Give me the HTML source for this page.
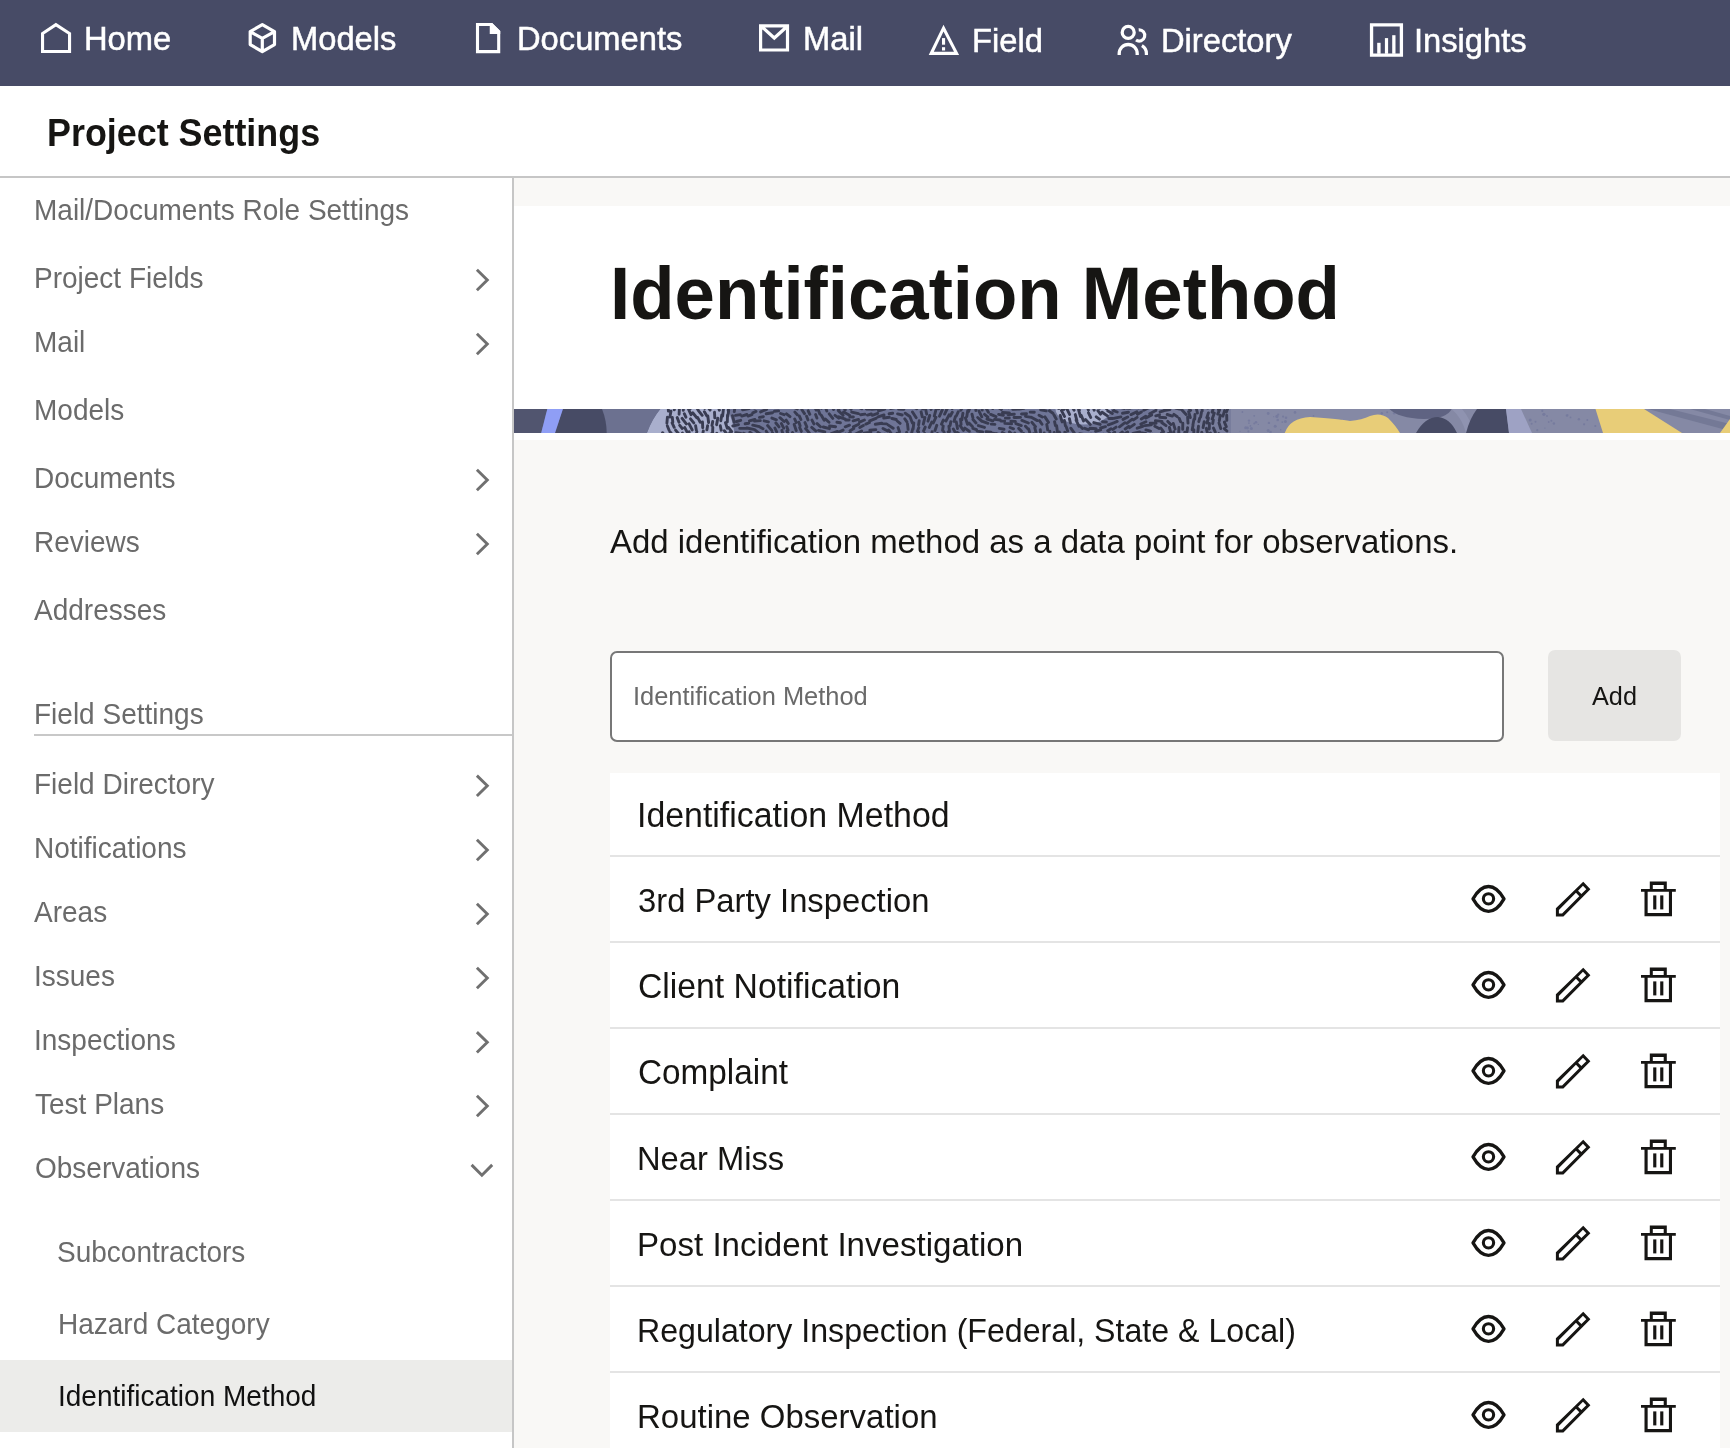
<!DOCTYPE html>
<html><head><meta charset="utf-8"><style>
html,body{margin:0;padding:0;width:1730px;height:1448px;overflow:hidden;background:#fff;}
.abs{position:absolute;}
.t{position:absolute;will-change:transform;font-family:"Liberation Sans",sans-serif;line-height:1;white-space:nowrap;}
</style></head><body>
<div class="abs" style="left:0;top:0;width:1730px;height:86px;background:#474b66"></div>

<svg class="abs" style="left:0;top:0" width="1730" height="86" viewBox="0 0 1730 86" fill="none" stroke="#ffffff" stroke-width="3.1">
 <path d="M42.55,51.45 V33.5 L55.9,24.7 L69.55,33.5 V51.45 Z" stroke-linejoin="miter"/>
 <path d="M262.3,24.6 L274.5,31.6 V44.6 L262.3,51.6 L250.2,44.6 V31.6 Z M250.2,31.6 L262.3,38.4 L274.5,31.6 M262.3,38.4 V51.6" stroke-width="3.2" stroke-linejoin="round"/>
 <path d="M477.5,24.5 H491.5 L498.7,31.7 V51.6 H477.5 Z"/>
 <path d="M489.75,23 H492.1 L500.2,31 V34 H489.75 Z" fill="#ffffff" stroke="none"/>
 <path d="M760.6,25.8 H787.5 V50 H760.6 Z M761.5,26.5 L774.3,38 L787,26.5" stroke-width="3.2"/>
 <path fill-rule="evenodd" fill="#ffffff" stroke="none" d="M943.5,24.8 L959.1,54.9 L928.7,54.9 Z M943.5,31.6 L933.8,51.8 L954,51.8 Z"/>
 <rect x="942" y="38.1" width="3.1" height="6.6" fill="#ffffff" stroke="none"/>
 <rect x="942" y="47.2" width="3.1" height="3.3" fill="#ffffff" stroke="none"/>
 <circle cx="1128.2" cy="32.45" r="6" stroke-width="3.25"/>
 <path d="M1119.2,55.1 V53.5 A9,9 0 0 1 1137.2,53.5 V55.1" stroke-width="3.3"/>
 <path d="M1138.7,29.8 A5.6,5.6 0 1 1 1136.0,40.0" stroke-width="3.2"/>
 <path d="M1141.9,45.7 A9,9 0 0 1 1146.4,53.5 V55.1" stroke-width="3.2"/>
 <path d="M1371.55,24.9 H1401.4 V55.1 H1371.55 Z" stroke-width="3.3"/>
 <rect x="1377.2" y="42.8" width="3.4" height="11" fill="#ffffff" stroke="none"/>
 <rect x="1384.9" y="38.1" width="3.2" height="15.7" fill="#ffffff" stroke="none"/>
 <rect x="1392.2" y="35.2" width="3.3" height="18.6" fill="#ffffff" stroke="none"/>
</svg>
<div class="abs" style="left:0;top:176px;width:1730px;height:2px;background:#c6c6c6"></div>
<div class="abs" style="left:514px;top:178px;width:1216px;height:1270px;background:#f9f8f6"></div>
<div class="abs" style="left:514px;top:206px;width:1216px;height:234px;background:#ffffff"></div>
<svg class="abs" style="left:514px;top:409px" width="1216" height="24" viewBox="514 409 1216 24"><defs><clipPath id="bc"><rect x="514" y="409" width="1216" height="24"/></clipPath></defs><g clip-path="url(#bc)"><rect x="514" y="409" width="1216" height="24" fill="#8589a5"/><rect x="640" y="409" width="591" height="24" fill="#6f7597"/><rect x="1150" y="409" width="81" height="24" fill="#787d9c"/><path d="M646.9,433 Q652,419 660.3,409 L727,409 Q733,420 734.3,433 Z" fill="#a9afcd"/><path d="M1055.5,409 A27.7,15.5 0 0 0 1111,409 Z" fill="#a9afcd"/><rect x="514" y="409" width="132" height="24" fill="#6c7190"/><path d="M646.9,433 Q652,419 660.3,409 L600,409 L600,433 Z" fill="#6c7190"/><path d="M514,409 L547.3,409 L541.2,433 L514,433 Z" fill="#51556f"/><path d="M562.9,409 L602,409 Q606.5,420 606.7,433 L555,433 Z" fill="#474b65"/><path d="M547.3,409 L562.9,409 L555,433 L541.2,433 Z" fill="#8f9ef5"/><path d="M662.6,432.7L666.2,437.9M667.4,417.3L666.9,423.1M667.3,425.8L669.1,430.2M668.1,404.1L668.4,411.1M671.0,411.1L669.9,417.0M669.9,431.8L672.5,434.8M672.3,417.5L672.8,422.2M672.1,422.8L674.2,427.3M675.1,404.0L674.3,409.9M675.6,430.1L678.7,433.9M677.2,417.6L679.0,422.2M679.4,408.5L679.1,414.3M679.7,425.4L682.3,428.5M682.4,433.1L683.7,436.7M683.7,405.3L683.3,410.3M682.1,418.4L686.3,423.9M684.3,413.7L685.9,417.2M684.8,427.6L687.5,432.8M689.1,431.7L689.6,437.1M688.5,409.1L691.0,414.7M689.8,404.4L690.3,408.5M689.1,423.8L692.2,429.9M690.5,418.8L693.8,422.9M692.7,412.8L696.8,417.7M695.6,425.8L696.3,430.1M696.8,431.5L695.9,437.6M695.6,405.7L698.4,410.5M697.7,417.6L700.2,422.2M698.2,410.4L702.2,415.3M702.5,422.0L702.7,427.8M703.3,431.0L702.5,435.3M702.4,405.5L704.7,408.4M704.4,411.8L706.9,415.9M707.6,425.7L706.9,429.8M707.8,415.9L708.6,422.5M707.7,406.9L710.1,410.0M711.7,433.3L712.9,437.7M712.7,421.5L712.0,425.5M712.8,427.3L712.6,433.3M714.5,412.3L714.8,417.9M717.8,418.1L716.6,424.7M716.8,433.3L719.6,438.0M717.8,405.4L719.4,410.2M720.3,425.7L721.2,430.2M721.8,414.9L720.8,420.7M723.4,409.4L722.6,416.1M724.3,430.7L727.5,434.9M725.5,422.7L727.3,428.2M727.5,415.2L727.3,422.0M728.7,410.5L727.8,416.3M728.8,403.9L728.2,410.7M728.6,427.6L731.7,431.6M729.8,432.6L733.6,437.8M732.5,415.7L734.2,422.3M734.9,407.4L734.3,411.6M732.8,426.0L738.5,424.7M735.5,415.4L740.3,414.6M735.9,432.8L740.7,433.4M736.6,421.5L740.7,420.3M738.7,406.8L743.3,407.3M739.7,428.4L746.3,428.3M741.8,416.1L746.9,414.5M742.6,409.7L749.2,408.5M743.6,433.2L749.6,436.6M745.1,423.8L748.8,423.2M748.0,416.1L751.9,414.6M746.9,428.0L753.6,429.3M748.0,407.2L753.6,405.7M749.4,420.8L754.9,419.5M749.9,432.2L755.0,436.4M752.8,412.8L756.0,411.4M752.7,425.2L759.4,426.7M754.5,408.1L758.5,406.4M754.6,429.7L759.3,433.3M754.5,421.1L760.3,420.6M759.0,426.5L763.0,428.7M759.5,417.4L763.4,416.7M760.7,433.9L762.5,437.2M760.6,411.9L766.6,409.3M764.1,420.8L768.4,421.9M766.2,431.1L768.2,434.7M765.7,407.4L769.4,405.5M766.2,413.8L772.6,412.7M767.6,425.5L771.8,430.4M772.5,432.7L773.6,436.3M770.8,407.4L775.6,405.2M771.9,418.1L776.4,419.8M774.9,428.0L776.7,431.9M774.4,411.3L778.6,410.9M775.9,423.0L779.0,426.9M779.9,417.7L784.1,421.5M780.6,413.5L784.1,414.7M781.4,423.6L783.7,428.1M781.9,430.4L783.3,435.6M782.0,407.4L786.0,407.0M786.1,420.1L788.3,423.5M786.8,426.7L788.0,430.1M787.0,431.0L788.8,436.5M786.5,413.8L790.0,416.6M786.9,406.2L793.1,406.7M792.5,432.6L794.1,436.0M794.2,424.5L796.2,430.5M793.6,407.2L797.3,408.9M794.7,419.0L796.2,422.4M794.9,412.1L797.3,414.8M798.9,422.2L800.1,425.8M799.4,416.1L800.9,419.5M798.6,405.1L801.9,406.9M799.7,427.6L801.3,431.1M801.3,433.9L804.5,436.9M801.9,409.8L804.5,413.6M805.0,422.6L806.8,426.8M805.6,405.1L808.1,407.6M806.6,416.2L808.0,419.9M805.6,428.5L809.3,432.9M808.2,410.8L809.8,414.3M807.7,434.8L813.4,437.1M812.0,420.1L813.9,423.9M811.7,427.4L815.8,430.9M813.6,405.0L816.2,410.1M815.6,414.6L816.9,418.1M815.0,435.5L820.0,435.9M817.7,408.2L819.8,413.9M817.1,423.6L820.5,426.8M819.4,403.8L821.4,408.3M818.5,430.4L824.8,431.9M821.3,415.2L824.2,420.3M824.7,405.1L826.8,411.1M823.3,427.0L829.5,428.7M825.4,419.0L829.0,422.3M824.9,435.8L830.0,434.4M829.2,413.8L832.8,418.4M829.6,426.0L835.6,426.7M831.7,404.3L833.5,409.6M831.3,433.7L837.5,431.4M835.0,415.4L838.8,418.2M837.2,406.4L839.0,410.0M836.9,422.2L840.4,422.7M838.3,410.6L843.1,415.2M838.4,432.3L843.1,430.1M838.8,416.8L845.3,419.2M840.0,437.8L845.5,434.1M842.3,405.4L845.3,409.9M843.6,412.0L849.5,415.2M845.5,420.0L849.1,420.0M845.2,426.8L849.5,425.2M847.0,434.9L850.3,432.8M847.1,404.4L851.1,409.2M849.7,416.7L853.4,417.0M850.1,430.7L853.8,428.6M851.0,437.1L857.1,434.0M851.7,412.1L858.4,413.6M853.1,420.8L858.5,419.4M853.4,426.9L858.7,424.2M855.5,434.1L861.7,431.1M856.5,406.2L861.7,408.8M859.8,427.5L863.3,425.6M859.5,422.1L864.4,420.0M860.7,414.7L864.9,414.1M860.7,436.0L865.4,435.1M862.5,405.1L867.9,407.0M864.0,433.3L870.8,432.2M865.9,424.1L869.5,422.5M867.5,415.1L871.3,414.0M866.4,409.0L872.7,409.0M869.8,430.2L875.8,429.6M869.7,420.9L876.0,418.3M871.0,434.8L877.1,437.0M872.2,415.3L877.7,413.4M871.8,409.4L878.4,408.5M875.3,424.3L881.8,423.2M878.1,432.6L882.4,435.2M878.0,416.9L884.0,415.0M878.5,410.9L884.8,409.2M881.5,423.6L886.6,423.9M883.0,428.4L887.7,431.1M884.8,434.2L886.8,437.2M883.7,418.0L889.3,417.3M884.1,407.9L889.7,406.7M888.7,430.0L891.6,434.1M888.0,424.9L893.2,428.2M889.1,413.7L892.7,413.2M890.6,408.6L895.2,407.7M892.0,418.5L896.3,419.5M897.0,433.1L897.3,438.3M897.2,421.0L900.1,423.4M898.1,427.6L899.5,431.8M897.6,413.9L902.2,415.0M898.6,409.1L903.9,409.2M904.8,418.9L906.9,421.8M906.7,432.3L905.6,437.5M904.1,406.2L908.9,406.7M905.2,413.2L909.5,416.2M907.5,423.9L908.1,429.3M910.0,416.8L912.4,423.1M912.8,428.5L911.4,434.0M913.8,422.9L913.1,429.1M912.5,412.0L916.2,417.7M913.3,406.8L916.8,408.8M918.6,431.9L916.4,438.0M918.8,427.5L917.5,431.2M919.2,420.8L918.6,424.8M917.7,404.5L922.9,409.0M921.1,411.8L922.3,416.9M924.9,417.5L923.3,424.2M924.7,433.3L923.7,436.7M925.2,427.1L923.6,430.8M925.5,408.7L926.7,414.2M929.7,415.5L928.0,421.2M929.4,404.5L931.1,409.4M931.8,422.0L929.3,427.4M932.1,431.6L931.2,437.7M936.0,417.2L933.3,422.9M936.0,409.7L934.3,416.1M936.8,425.3L935.0,430.5M937.5,433.5L938.3,438.2M939.0,404.8L938.7,408.9M942.3,409.9L939.5,416.2M943.3,420.1L941.5,424.2M943.2,426.0L942.6,430.3M943.9,431.8L944.9,435.5M947.3,408.7L944.6,414.1M948.2,403.4L946.4,408.7M949.1,414.8L945.9,421.0M948.9,426.2L949.5,431.3M948.2,431.7L951.2,436.8M950.8,421.7L950.1,425.6M952.3,412.3L950.3,416.0M954.2,404.3L952.1,408.6M953.3,428.9L955.5,432.9M955.5,416.4L954.0,421.4M956.3,421.9L957.5,428.5M958.2,411.8L956.3,416.0M957.2,432.5L961.4,435.7M960.5,419.1L961.1,424.4M960.1,425.6L963.5,430.4M963.5,405.4L960.8,410.2M962.9,413.3L961.9,419.9M963.2,434.4L968.2,436.3M965.4,417.9L967.5,424.3M964.8,428.1L969.3,431.3M967.7,410.7L966.8,416.5M970.9,404.9L968.6,411.4M969.0,423.1L972.4,426.5M972.0,414.2L972.9,417.9M970.8,434.2L975.2,435.2M973.0,419.5L976.0,423.0M972.9,428.3L976.5,429.7M976.2,406.9L975.8,410.5M977.7,417.5L981.9,421.3M977.1,431.1L982.6,432.0M979.0,411.1L981.8,416.8M978.3,425.6L984.5,427.4M981.7,406.2L982.2,410.0M980.9,435.4L985.6,436.1M982.5,421.3L988.0,423.3M984.5,414.3L987.9,417.1M985.8,407.6L988.4,412.3M986.1,431.7L991.0,432.3M987.0,419.0L992.9,420.8M990.3,403.8L992.7,408.6M991.3,424.1L994.9,424.4M990.7,414.4L996.0,416.6M991.4,432.8L996.4,433.8M994.6,419.4L1000.3,420.0M996.2,433.5L1002.3,436.1M997.1,406.7L1001.4,409.5M998.6,414.4L1003.3,415.2M999.2,428.4L1004.0,429.2M1000.8,421.1L1004.7,421.1M1002.3,432.4L1007.9,435.8M1002.5,412.5L1009.4,413.0M1003.6,406.0L1008.3,407.7M1005.4,418.1L1009.3,418.0M1004.9,423.4L1011.6,423.9M1008.0,414.6L1014.3,414.2M1009.4,431.9L1013.2,435.3M1010.1,427.5L1013.5,428.8M1010.9,421.1L1015.4,421.4M1014.8,433.1L1017.5,437.9M1012.8,409.3L1019.8,408.8M1014.0,417.5L1020.5,417.4M1015.9,423.6L1021.3,425.6M1018.7,428.4L1021.4,431.1M1019.2,409.1L1023.9,408.3M1021.5,414.0L1026.5,413.7M1023.5,433.3L1024.7,438.3M1021.9,420.4L1028.4,423.0M1025.5,426.2L1027.9,428.9M1024.2,407.6L1029.3,406.6M1025.5,416.4L1031.2,417.4M1028.7,429.1L1030.5,435.0M1030.2,412.1L1034.3,412.2M1030.1,407.5L1036.5,406.3M1033.5,433.8L1033.7,437.5M1031.9,422.3L1035.5,426.7M1031.3,417.3L1037.4,420.6M1034.8,427.8L1036.1,432.8M1035.7,407.6L1042.0,407.1M1040.3,429.7L1040.6,434.3M1039.0,415.2L1042.3,417.1M1039.5,420.6L1042.0,424.3M1040.7,409.8L1046.2,410.9M1044.2,433.0L1044.3,438.2M1044.9,416.9L1048.5,422.4M1046.8,424.5L1047.7,429.9M1045.8,407.0L1050.4,407.8M1049.8,431.1L1050.1,435.6M1049.4,410.8L1052.9,413.2M1054.2,432.5L1055.4,438.4M1054.6,421.6L1055.4,425.5M1053.9,414.7L1056.2,419.0M1053.6,406.0L1058.9,408.5M1056.6,425.7L1057.5,432.4M1059.4,432.0L1061.7,437.8M1060.2,415.5L1062.1,421.9M1059.2,405.8L1063.9,409.4M1061.5,410.6L1064.5,416.4M1064.4,420.4L1065.4,425.8M1064.8,432.2L1068.0,436.8M1065.2,404.9L1068.2,407.7M1066.1,426.6L1067.7,431.1M1066.6,408.3L1069.6,414.4M1069.4,418.6L1070.4,423.0M1070.8,428.2L1074.2,432.9M1071.7,406.0L1074.1,410.2M1073.6,434.2L1078.5,436.5M1075.3,414.6L1076.9,420.7M1076.1,420.1L1078.9,426.2M1076.9,404.5L1079.4,410.0M1078.6,409.8L1080.5,416.5M1079.8,425.8L1082.5,428.5M1081.3,415.5L1083.5,420.9M1079.6,433.6L1085.4,434.8M1084.8,428.3L1088.6,429.8M1086.7,404.9L1088.4,410.1M1085.5,419.5L1090.3,424.5M1084.7,434.9L1091.2,434.3M1088.5,412.9L1090.7,417.4M1090.0,428.3L1096.1,428.8M1090.5,436.5L1095.7,434.6M1092.4,405.2L1094.2,410.2M1093.8,422.6L1100.2,424.4M1096.2,416.8L1099.4,419.2M1095.6,431.3L1100.7,429.9M1098.0,404.4L1099.6,408.3M1097.9,410.7L1100.5,414.1M1099.1,437.2L1103.4,434.2M1100.6,428.0L1105.5,426.7M1102.5,421.8L1106.4,422.0M1102.1,412.2L1107.4,415.9M1103.7,404.2L1106.7,409.1M1104.8,437.0L1109.6,433.1M1107.7,430.8L1111.0,428.7M1107.9,411.1L1112.3,413.5M1108.2,424.8L1112.5,423.3M1108.8,418.5L1113.0,418.5M1110.9,404.2L1114.5,408.0M1111.7,434.7L1114.7,432.2M1112.9,429.4L1116.1,427.1M1113.4,410.7L1117.2,412.0M1113.5,423.0L1117.2,421.4M1114.7,418.2L1120.9,416.9M1118.5,434.9L1122.4,432.0M1120.5,407.4L1124.0,408.4M1119.5,426.8L1125.0,422.7M1123.0,419.4L1127.7,417.0M1122.5,413.3L1128.5,412.2M1124.4,434.0L1127.6,432.1M1125.2,429.0L1128.7,426.4M1126.3,408.1L1130.1,408.2M1126.8,423.3L1132.3,419.2M1128.0,435.7L1133.5,434.2M1129.6,427.6L1134.3,424.4M1130.3,407.9L1136.7,407.1M1131.0,414.6L1136.9,411.7M1133.5,419.9L1137.1,417.4M1132.9,433.3L1139.7,432.0M1137.5,414.3L1141.4,411.9M1137.2,428.2L1142.7,426.3M1138.5,407.8L1142.0,406.7M1140.0,432.6L1145.6,433.5M1140.8,424.0L1145.9,421.7M1141.3,419.0L1145.8,416.2M1143.8,410.3L1148.0,408.0M1144.7,425.6L1151.3,424.9M1145.4,433.8L1150.7,437.6M1145.9,429.9L1150.5,431.1M1145.9,418.0L1151.7,414.9M1149.7,413.8L1155.8,410.5M1151.3,407.4L1155.0,405.5M1150.2,423.2L1156.1,423.2M1152.7,434.3L1155.0,437.3M1154.8,426.2L1159.1,428.5M1155.8,415.8L1159.5,414.8M1156.4,408.3L1160.6,406.2M1155.4,420.6L1162.0,421.4M1160.1,411.9L1163.6,410.8M1160.8,428.0L1163.6,431.8M1161.5,432.8L1163.3,439.0M1159.8,417.3L1165.7,417.8M1161.6,422.5L1166.0,425.7M1163.9,410.5L1169.9,409.5M1168.4,433.5L1168.8,437.2M1167.8,421.4L1170.8,424.6M1167.2,414.5L1172.4,416.1M1169.4,427.5L1170.8,432.6M1169.9,406.7L1174.7,406.1M1173.8,431.7L1173.8,438.6M1173.3,423.4L1175.1,429.1M1173.9,414.3L1177.2,416.7M1175.6,408.1L1179.5,409.1M1178.9,427.5L1178.7,433.6M1179.4,433.8L1179.2,437.7M1179.2,418.4L1180.6,421.8M1182.8,423.2L1182.7,429.4M1180.5,404.8L1186.7,407.3M1181.7,409.7L1186.1,414.5M1184.8,432.1L1184.4,436.3M1187.6,427.6L1187.0,431.8M1187.6,416.9L1188.0,423.1M1188.1,407.3L1190.6,410.4M1188.6,411.7L1190.3,417.5M1193.0,425.5L1192.2,429.8M1193.9,419.5L1192.9,424.9M1193.9,429.8L1193.7,435.8M1195.0,414.4L1194.7,419.2M1196.0,406.9L1197.4,413.0M1198.5,426.1L1197.8,432.2M1199.7,418.2L1198.8,421.7M1201.5,412.1L1200.6,416.9M1201.9,406.3L1202.2,410.9M1201.7,432.3L1204.1,438.6M1204.2,421.7L1203.1,427.5M1206.3,428.3L1207.8,434.5M1208.4,412.9L1206.8,417.7M1208.4,418.0L1207.0,423.0M1207.9,404.6L1207.7,408.1M1209.4,423.5L1209.3,429.0M1210.3,433.0L1213.9,437.3M1213.9,406.8L1212.1,412.2M1213.3,420.0L1212.7,423.5M1214.3,413.0L1212.2,419.0M1213.5,428.1L1215.3,432.1M1219.6,409.6L1217.8,414.1M1220.9,403.7L1218.4,409.7M1220.3,415.1L1219.3,420.7M1219.0,422.9L1220.7,428.5M1218.8,433.6L1222.9,436.3M1224.6,410.6L1222.9,416.2M1224.4,422.1L1226.3,426.6M1224.3,428.6L1226.9,431.0M1226.7,415.3L1226.8,420.4M1228.3,407.2L1226.4,412.0" stroke="#393c52" stroke-width="2.9" stroke-linecap="round" fill="none"/><g fill="#767b9e"><circle cx="1584.1" cy="424.3" r="1.1"/><circle cx="1280.7" cy="429.8" r="0.7"/><circle cx="1567.0" cy="415.5" r="1.3"/><circle cx="1268.2" cy="413.5" r="1.4"/><circle cx="1240.0" cy="431.4" r="0.6"/><circle cx="1276.9" cy="416.4" r="1.6"/><circle cx="1543.9" cy="414.3" r="1.6"/><circle cx="1254.2" cy="415.8" r="0.9"/><circle cx="1570.5" cy="417.4" r="0.9"/><circle cx="1314.5" cy="420.4" r="0.8"/><circle cx="1385.5" cy="428.6" r="0.6"/><circle cx="1277.7" cy="420.0" r="1.3"/><circle cx="1268.2" cy="430.5" r="1.5"/><circle cx="1295.0" cy="412.4" r="1.3"/><circle cx="1278.2" cy="414.6" r="1.1"/><circle cx="1548.7" cy="422.0" r="0.9"/><circle cx="1250.4" cy="425.9" r="0.9"/><circle cx="1535.5" cy="421.7" r="1.0"/><circle cx="1332.1" cy="424.3" r="0.7"/><circle cx="1338.9" cy="428.4" r="0.7"/><circle cx="1387.2" cy="412.3" r="1.0"/><circle cx="1370.9" cy="430.3" r="1.2"/><circle cx="1595.3" cy="426.0" r="1.1"/><circle cx="1302.6" cy="428.1" r="1.1"/><circle cx="1242.4" cy="412.0" r="0.9"/><circle cx="1374.4" cy="425.3" r="1.3"/><circle cx="1296.3" cy="428.4" r="0.9"/><circle cx="1351.0" cy="424.3" r="1.2"/><circle cx="1547.0" cy="416.0" r="0.9"/><circle cx="1344.4" cy="424.2" r="1.3"/><circle cx="1587.3" cy="419.9" r="1.0"/><circle cx="1251.4" cy="428.4" r="1.5"/><circle cx="1578.9" cy="419.2" r="1.2"/><circle cx="1320.1" cy="423.7" r="1.4"/><circle cx="1268.9" cy="422.9" r="1.2"/><circle cx="1542.3" cy="410.9" r="1.1"/><circle cx="1248.4" cy="431.3" r="1.1"/><circle cx="1553.9" cy="423.5" r="1.2"/><circle cx="1380.0" cy="430.9" r="1.5"/><circle cx="1282.3" cy="422.1" r="0.9"/><circle cx="1319.5" cy="431.1" r="1.4"/><circle cx="1366.0" cy="420.3" r="0.8"/><circle cx="1254.2" cy="423.4" r="1.0"/><circle cx="1537.3" cy="430.2" r="1.1"/><circle cx="1375.9" cy="419.5" r="0.8"/><circle cx="1248.9" cy="423.1" r="0.9"/><circle cx="1316.9" cy="430.8" r="0.9"/><circle cx="1531.6" cy="423.7" r="1.0"/><circle cx="1249.0" cy="420.6" r="1.2"/><circle cx="1313.5" cy="415.9" r="0.8"/><circle cx="1285.4" cy="421.4" r="1.5"/><circle cx="1283.1" cy="416.6" r="1.1"/><circle cx="1286.0" cy="417.7" r="1.3"/><circle cx="1530.2" cy="420.0" r="1.5"/><circle cx="1324.6" cy="423.1" r="1.3"/><circle cx="1340.6" cy="420.5" r="1.3"/><circle cx="1273.7" cy="416.7" r="0.6"/><circle cx="1330.2" cy="430.0" r="0.7"/><circle cx="1325.1" cy="421.8" r="1.0"/><circle cx="1247.5" cy="428.0" r="1.4"/><circle cx="1270.5" cy="432.0" r="1.3"/><circle cx="1544.9" cy="428.1" r="0.7"/><circle cx="1394.1" cy="413.3" r="1.2"/><circle cx="1256.0" cy="422.2" r="1.3"/><circle cx="1275.2" cy="426.3" r="1.5"/><circle cx="1551.4" cy="420.8" r="1.0"/><circle cx="1381.8" cy="413.3" r="1.2"/><circle cx="1567.7" cy="414.9" r="0.7"/><circle cx="1245.7" cy="427.8" r="1.5"/><circle cx="1258.3" cy="424.4" r="0.7"/></g><path d="M1284.7,433 Q1290,418 1310,417 Q1340,419 1350,421 Q1362,420 1370,416 Q1380,412 1388,418 Q1396,426 1400,433 Z" fill="#e8cd78"/><path d="M1390,409 L1400,409 L1400,415 Z" fill="#575b78"/><path d="M1389.5,409 L1451.6,409 Q1447,419 1424,419 Q1398,418 1389.5,409 Z" fill="#5f6382"/><path d="M1451.6,409 L1462,409 Q1470,418 1474,433 L1466,433 Q1462,418 1451.6,409 Z" fill="#8f93b0"/><path d="M1416,433 Q1425,417 1438,417 Q1450,418 1457,433 Z" fill="#474b65"/><path d="M1477,409 L1506,409 L1509,433 L1466,433 Q1470,418 1477,409 Z" fill="#474b65"/><path d="M1506,409 L1521,409 L1532,433 L1509,433 Z" fill="#9ea2c4"/><path d="M1595.5,409 L1644,409 L1682,433 L1603,433 Z" fill="#e8cd78"/><path d="M1648,409 L1670,409 L1730,424 L1730,431 Z" fill="#747996"/><path d="M1690,409 L1705,409 L1730,416 L1730,420 Z" fill="#747996"/><path d="M1720,433 L1730,419 L1730,433 Z" fill="#e8cd78"/></g></svg>
<div class="abs" style="left:512px;top:178px;width:2px;height:1270px;background:#c6c6c6"></div>
<div class="abs" style="left:34px;top:734px;width:478px;height:2px;background:#c8c8c8"></div>
<div class="abs" style="left:0;top:1360px;width:512px;height:71.5px;background:#ececea"></div>
<svg class="abs" style="left:0;top:0" width="514" height="1448" fill="none" stroke="#707070" stroke-width="2.9" stroke-linecap="butt" stroke-linejoin="miter"><path d="M476.9,269.8 L487.3,280.0 L476.9,290.2"/><path d="M476.9,333.8 L487.3,344.0 L476.9,354.2"/><path d="M476.9,469.8 L487.3,480.0 L476.9,490.2"/><path d="M476.9,533.8 L487.3,544.0 L476.9,554.2"/><path d="M476.9,775.6 L487.3,785.8 L476.9,796.0"/><path d="M476.9,839.8 L487.3,850.0 L476.9,860.2"/><path d="M476.9,903.8 L487.3,914.0 L476.9,924.2"/><path d="M476.9,967.8 L487.3,978.0 L476.9,988.2"/><path d="M476.9,1032.1 L487.3,1042.3 L476.9,1052.5"/><path d="M476.9,1095.8 L487.3,1106.0 L476.9,1116.2"/><path d="M471.6,1164.9 L481.9,1175.2 L492.2,1164.9"/></svg>
<div class="abs" style="left:610px;top:651px;width:890px;height:86.5px;border:2px solid #777777;border-radius:7px;background:#fff"></div>
<div class="abs" style="left:1548px;top:650px;width:133px;height:91px;border-radius:7px;background:#e6e5e3"></div>
<div class="abs" style="left:610px;top:773px;width:1110px;height:675px;background:#ffffff"></div>
<div class="abs" style="left:610px;top:855px;width:1110px;height:2px;background:#e4e4e4"></div><div class="abs" style="left:610px;top:941px;width:1110px;height:2px;background:#e4e4e4"></div><div class="abs" style="left:610px;top:1027px;width:1110px;height:2px;background:#e4e4e4"></div><div class="abs" style="left:610px;top:1113px;width:1110px;height:2px;background:#e4e4e4"></div><div class="abs" style="left:610px;top:1199px;width:1110px;height:2px;background:#e4e4e4"></div><div class="abs" style="left:610px;top:1285px;width:1110px;height:2px;background:#e4e4e4"></div><div class="abs" style="left:610px;top:1371px;width:1110px;height:2px;background:#e4e4e4"></div>
<svg class="abs" style="left:0;top:0" width="1730" height="1448" fill="none" stroke="#161513"><g transform="translate(0,0)">
 <path d="M1473,898.9 C1478,890 1483,886.5 1488.5,886.5 C1494,886.5 1499,890 1504,898.9 C1499,907.8 1494,911.3 1488.5,911.3 C1483,911.3 1478,907.8 1473,898.9 Z" stroke-width="3.3" stroke-linejoin="round"/>
 <circle cx="1488.5" cy="898.85" r="5.15" stroke-width="3.1"/>
 <path fill-rule="evenodd" fill="#161513" stroke="none" d="M1555.9,908.3 L1583.25,881.75 L1590.4,889.2 L1563.4,916.4 L1555.9,916.4 Z M1558.9,909.9 L1575.95,892.85 L1579.3,896.2 L1562.1,913.4 L1558.9,913.4 Z M1578.05,890.75 L1582.95,885.85 L1586.3,889.2 L1581.4,894.1 Z"/>
 <path fill-rule="evenodd" fill="#161513" stroke="none" d="M1641,889 H1649.8 V881.6 H1666.8 V889 H1675.8 V891.85 H1672 V916.2 H1644.5 V891.85 H1641 Z M1652.8,884.9 V889 H1663.7 V884.9 Z M1647.65,891.85 V913.1 H1668.9 V891.85 Z"/>
 <rect x="1653.2" y="895.4" width="3.15" height="14" fill="#161513" stroke="none"/>
 <rect x="1660.2" y="895.4" width="3.15" height="14" fill="#161513" stroke="none"/>
</g><g transform="translate(0,86)">
 <path d="M1473,898.9 C1478,890 1483,886.5 1488.5,886.5 C1494,886.5 1499,890 1504,898.9 C1499,907.8 1494,911.3 1488.5,911.3 C1483,911.3 1478,907.8 1473,898.9 Z" stroke-width="3.3" stroke-linejoin="round"/>
 <circle cx="1488.5" cy="898.85" r="5.15" stroke-width="3.1"/>
 <path fill-rule="evenodd" fill="#161513" stroke="none" d="M1555.9,908.3 L1583.25,881.75 L1590.4,889.2 L1563.4,916.4 L1555.9,916.4 Z M1558.9,909.9 L1575.95,892.85 L1579.3,896.2 L1562.1,913.4 L1558.9,913.4 Z M1578.05,890.75 L1582.95,885.85 L1586.3,889.2 L1581.4,894.1 Z"/>
 <path fill-rule="evenodd" fill="#161513" stroke="none" d="M1641,889 H1649.8 V881.6 H1666.8 V889 H1675.8 V891.85 H1672 V916.2 H1644.5 V891.85 H1641 Z M1652.8,884.9 V889 H1663.7 V884.9 Z M1647.65,891.85 V913.1 H1668.9 V891.85 Z"/>
 <rect x="1653.2" y="895.4" width="3.15" height="14" fill="#161513" stroke="none"/>
 <rect x="1660.2" y="895.4" width="3.15" height="14" fill="#161513" stroke="none"/>
</g><g transform="translate(0,172)">
 <path d="M1473,898.9 C1478,890 1483,886.5 1488.5,886.5 C1494,886.5 1499,890 1504,898.9 C1499,907.8 1494,911.3 1488.5,911.3 C1483,911.3 1478,907.8 1473,898.9 Z" stroke-width="3.3" stroke-linejoin="round"/>
 <circle cx="1488.5" cy="898.85" r="5.15" stroke-width="3.1"/>
 <path fill-rule="evenodd" fill="#161513" stroke="none" d="M1555.9,908.3 L1583.25,881.75 L1590.4,889.2 L1563.4,916.4 L1555.9,916.4 Z M1558.9,909.9 L1575.95,892.85 L1579.3,896.2 L1562.1,913.4 L1558.9,913.4 Z M1578.05,890.75 L1582.95,885.85 L1586.3,889.2 L1581.4,894.1 Z"/>
 <path fill-rule="evenodd" fill="#161513" stroke="none" d="M1641,889 H1649.8 V881.6 H1666.8 V889 H1675.8 V891.85 H1672 V916.2 H1644.5 V891.85 H1641 Z M1652.8,884.9 V889 H1663.7 V884.9 Z M1647.65,891.85 V913.1 H1668.9 V891.85 Z"/>
 <rect x="1653.2" y="895.4" width="3.15" height="14" fill="#161513" stroke="none"/>
 <rect x="1660.2" y="895.4" width="3.15" height="14" fill="#161513" stroke="none"/>
</g><g transform="translate(0,258)">
 <path d="M1473,898.9 C1478,890 1483,886.5 1488.5,886.5 C1494,886.5 1499,890 1504,898.9 C1499,907.8 1494,911.3 1488.5,911.3 C1483,911.3 1478,907.8 1473,898.9 Z" stroke-width="3.3" stroke-linejoin="round"/>
 <circle cx="1488.5" cy="898.85" r="5.15" stroke-width="3.1"/>
 <path fill-rule="evenodd" fill="#161513" stroke="none" d="M1555.9,908.3 L1583.25,881.75 L1590.4,889.2 L1563.4,916.4 L1555.9,916.4 Z M1558.9,909.9 L1575.95,892.85 L1579.3,896.2 L1562.1,913.4 L1558.9,913.4 Z M1578.05,890.75 L1582.95,885.85 L1586.3,889.2 L1581.4,894.1 Z"/>
 <path fill-rule="evenodd" fill="#161513" stroke="none" d="M1641,889 H1649.8 V881.6 H1666.8 V889 H1675.8 V891.85 H1672 V916.2 H1644.5 V891.85 H1641 Z M1652.8,884.9 V889 H1663.7 V884.9 Z M1647.65,891.85 V913.1 H1668.9 V891.85 Z"/>
 <rect x="1653.2" y="895.4" width="3.15" height="14" fill="#161513" stroke="none"/>
 <rect x="1660.2" y="895.4" width="3.15" height="14" fill="#161513" stroke="none"/>
</g><g transform="translate(0,344)">
 <path d="M1473,898.9 C1478,890 1483,886.5 1488.5,886.5 C1494,886.5 1499,890 1504,898.9 C1499,907.8 1494,911.3 1488.5,911.3 C1483,911.3 1478,907.8 1473,898.9 Z" stroke-width="3.3" stroke-linejoin="round"/>
 <circle cx="1488.5" cy="898.85" r="5.15" stroke-width="3.1"/>
 <path fill-rule="evenodd" fill="#161513" stroke="none" d="M1555.9,908.3 L1583.25,881.75 L1590.4,889.2 L1563.4,916.4 L1555.9,916.4 Z M1558.9,909.9 L1575.95,892.85 L1579.3,896.2 L1562.1,913.4 L1558.9,913.4 Z M1578.05,890.75 L1582.95,885.85 L1586.3,889.2 L1581.4,894.1 Z"/>
 <path fill-rule="evenodd" fill="#161513" stroke="none" d="M1641,889 H1649.8 V881.6 H1666.8 V889 H1675.8 V891.85 H1672 V916.2 H1644.5 V891.85 H1641 Z M1652.8,884.9 V889 H1663.7 V884.9 Z M1647.65,891.85 V913.1 H1668.9 V891.85 Z"/>
 <rect x="1653.2" y="895.4" width="3.15" height="14" fill="#161513" stroke="none"/>
 <rect x="1660.2" y="895.4" width="3.15" height="14" fill="#161513" stroke="none"/>
</g><g transform="translate(0,430)">
 <path d="M1473,898.9 C1478,890 1483,886.5 1488.5,886.5 C1494,886.5 1499,890 1504,898.9 C1499,907.8 1494,911.3 1488.5,911.3 C1483,911.3 1478,907.8 1473,898.9 Z" stroke-width="3.3" stroke-linejoin="round"/>
 <circle cx="1488.5" cy="898.85" r="5.15" stroke-width="3.1"/>
 <path fill-rule="evenodd" fill="#161513" stroke="none" d="M1555.9,908.3 L1583.25,881.75 L1590.4,889.2 L1563.4,916.4 L1555.9,916.4 Z M1558.9,909.9 L1575.95,892.85 L1579.3,896.2 L1562.1,913.4 L1558.9,913.4 Z M1578.05,890.75 L1582.95,885.85 L1586.3,889.2 L1581.4,894.1 Z"/>
 <path fill-rule="evenodd" fill="#161513" stroke="none" d="M1641,889 H1649.8 V881.6 H1666.8 V889 H1675.8 V891.85 H1672 V916.2 H1644.5 V891.85 H1641 Z M1652.8,884.9 V889 H1663.7 V884.9 Z M1647.65,891.85 V913.1 H1668.9 V891.85 Z"/>
 <rect x="1653.2" y="895.4" width="3.15" height="14" fill="#161513" stroke="none"/>
 <rect x="1660.2" y="895.4" width="3.15" height="14" fill="#161513" stroke="none"/>
</g><g transform="translate(0,516)">
 <path d="M1473,898.9 C1478,890 1483,886.5 1488.5,886.5 C1494,886.5 1499,890 1504,898.9 C1499,907.8 1494,911.3 1488.5,911.3 C1483,911.3 1478,907.8 1473,898.9 Z" stroke-width="3.3" stroke-linejoin="round"/>
 <circle cx="1488.5" cy="898.85" r="5.15" stroke-width="3.1"/>
 <path fill-rule="evenodd" fill="#161513" stroke="none" d="M1555.9,908.3 L1583.25,881.75 L1590.4,889.2 L1563.4,916.4 L1555.9,916.4 Z M1558.9,909.9 L1575.95,892.85 L1579.3,896.2 L1562.1,913.4 L1558.9,913.4 Z M1578.05,890.75 L1582.95,885.85 L1586.3,889.2 L1581.4,894.1 Z"/>
 <path fill-rule="evenodd" fill="#161513" stroke="none" d="M1641,889 H1649.8 V881.6 H1666.8 V889 H1675.8 V891.85 H1672 V916.2 H1644.5 V891.85 H1641 Z M1652.8,884.9 V889 H1663.7 V884.9 Z M1647.65,891.85 V913.1 H1668.9 V891.85 Z"/>
 <rect x="1653.2" y="895.4" width="3.15" height="14" fill="#161513" stroke="none"/>
 <rect x="1660.2" y="895.4" width="3.15" height="14" fill="#161513" stroke="none"/>
</g></svg>
<div class="t" style="left:84.2px;top:23.1px;font-size:32.7px;color:#ffffff;-webkit-text-stroke:0.5px #ffffff;">Home</div><div class="t" style="left:291.2px;top:22.7px;font-size:32.7px;color:#ffffff;-webkit-text-stroke:0.5px #ffffff;">Models</div><div class="t" style="left:517.2px;top:23.1px;font-size:32.7px;color:#ffffff;-webkit-text-stroke:0.5px #ffffff;">Documents</div><div class="t" style="left:803.2px;top:23.3px;font-size:32.7px;color:#ffffff;-webkit-text-stroke:0.5px #ffffff;">Mail</div><div class="t" style="left:972.2px;top:25.2px;font-size:32.7px;color:#ffffff;-webkit-text-stroke:0.5px #ffffff;">Field</div><div class="t" style="left:1161.2px;top:25.2px;font-size:32.7px;color:#ffffff;-webkit-text-stroke:0.5px #ffffff;">Directory</div><div class="t" style="left:1413.9px;top:25.0px;font-size:32.7px;color:#ffffff;-webkit-text-stroke:0.5px #ffffff;">Insights</div><div class="t" style="left:46.8px;top:117.2px;font-size:35.89px;font-weight:700;color:#161513;transform:scaleY(1.1);transform-origin:0 29px;">Project Settings</div><div class="t" style="left:34.2px;top:197.3px;font-size:28px;color:#6b6b6b;transform:scaleY(1.07);transform-origin:0 23px;">Mail/Documents Role Settings</div><div class="t" style="left:34.2px;top:265.0px;font-size:28px;color:#6b6b6b;transform:scaleY(1.07);transform-origin:0 23px;">Project Fields</div><div class="t" style="left:34.2px;top:329.0px;font-size:28px;color:#6b6b6b;transform:scaleY(1.07);transform-origin:0 23px;">Mail</div><div class="t" style="left:34.2px;top:397.3px;font-size:28px;color:#6b6b6b;transform:scaleY(1.07);transform-origin:0 23px;">Models</div><div class="t" style="left:34.2px;top:465.0px;font-size:28px;color:#6b6b6b;transform:scaleY(1.07);transform-origin:0 23px;">Documents</div><div class="t" style="left:34.2px;top:529.0px;font-size:28px;color:#6b6b6b;transform:scaleY(1.07);transform-origin:0 23px;">Reviews</div><div class="t" style="left:34.3px;top:597.3px;font-size:28px;color:#6b6b6b;transform:scaleY(1.07);transform-origin:0 23px;">Addresses</div><div class="t" style="left:34.2px;top:701.0px;font-size:28px;color:#6b6b6b;transform:scaleY(1.07);transform-origin:0 23px;">Field Settings</div><div class="t" style="left:34.2px;top:770.8px;font-size:28px;color:#6b6b6b;transform:scaleY(1.07);transform-origin:0 23px;">Field Directory</div><div class="t" style="left:34.2px;top:835.0px;font-size:28px;color:#6b6b6b;transform:scaleY(1.07);transform-origin:0 23px;">Notifications</div><div class="t" style="left:34.3px;top:899.0px;font-size:28px;color:#6b6b6b;transform:scaleY(1.07);transform-origin:0 23px;">Areas</div><div class="t" style="left:34.2px;top:963.0px;font-size:28px;color:#6b6b6b;transform:scaleY(1.07);transform-origin:0 23px;">Issues</div><div class="t" style="left:34.2px;top:1027.3px;font-size:28px;color:#6b6b6b;transform:scaleY(1.07);transform-origin:0 23px;">Inspections</div><div class="t" style="left:35.2px;top:1091.0px;font-size:28px;color:#6b6b6b;transform:scaleY(1.07);transform-origin:0 23px;">Test Plans</div><div class="t" style="left:35.2px;top:1155.2px;font-size:28px;color:#6b6b6b;transform:scaleY(1.07);transform-origin:0 23px;">Observations</div><div class="t" style="left:57.4px;top:1238.8px;font-size:28px;color:#6b6b6b;transform:scaleY(1.07);transform-origin:0 23px;">Subcontractors</div><div class="t" style="left:57.7px;top:1311.0px;font-size:28px;color:#6b6b6b;transform:scaleY(1.07);transform-origin:0 23px;">Hazard Category</div><div class="t" style="left:57.7px;top:1383.0px;font-size:28px;color:#111111;transform:scaleY(1.07);transform-origin:0 23px;">Identification Method</div><div class="t" style="left:610.0px;top:257.9px;font-size:72.6px;font-weight:700;color:#161513;transform:scaleY(1.03);transform-origin:0 61px;">Identification Method</div><div class="t" style="left:610.4px;top:526.0px;font-size:32.96px;color:#161513;transform:scaleY(1.03);transform-origin:0 27px;">Add identification method as a data point for observations.</div><div class="t" style="left:632.5px;top:683.8px;font-size:25.45px;color:#6a6a6a;">Identification Method</div><div class="t" style="left:1592.0px;top:684.2px;font-size:25.27px;color:#161513;">Add</div><div class="t" style="left:636.5px;top:799.2px;font-size:33.88px;color:#161513;transform:scaleY(1.03);transform-origin:0 28px;">Identification Method</div><div class="t" style="left:637.6px;top:885.0px;font-size:32.77px;color:#161513;transform:scaleY(1.03);transform-origin:0 27px;">3rd Party Inspection</div><div class="t" style="left:638.2px;top:970.0px;font-size:33.73px;color:#161513;transform:scaleY(1.03);transform-origin:0 28px;">Client Notification</div><div class="t" style="left:638.2px;top:1056.0px;font-size:33.31px;color:#161513;transform:scaleY(1.03);transform-origin:0 28px;">Complaint</div><div class="t" style="left:637.2px;top:1143.0px;font-size:32.71px;color:#161513;transform:scaleY(1.03);transform-origin:0 27px;">Near Miss</div><div class="t" style="left:637.2px;top:1228.0px;font-size:33.08px;color:#161513;transform:scaleY(1.03);transform-origin:0 28px;">Post Incident Investigation</div><div class="t" style="left:637.2px;top:1315.0px;font-size:32.13px;color:#161513;transform:scaleY(1.03);transform-origin:0 27px;">Regulatory Inspection (Federal, State &amp; Local)</div><div class="t" style="left:637.2px;top:1401.0px;font-size:32.97px;color:#161513;transform:scaleY(1.03);transform-origin:0 27px;">Routine Observation</div>
</body></html>
